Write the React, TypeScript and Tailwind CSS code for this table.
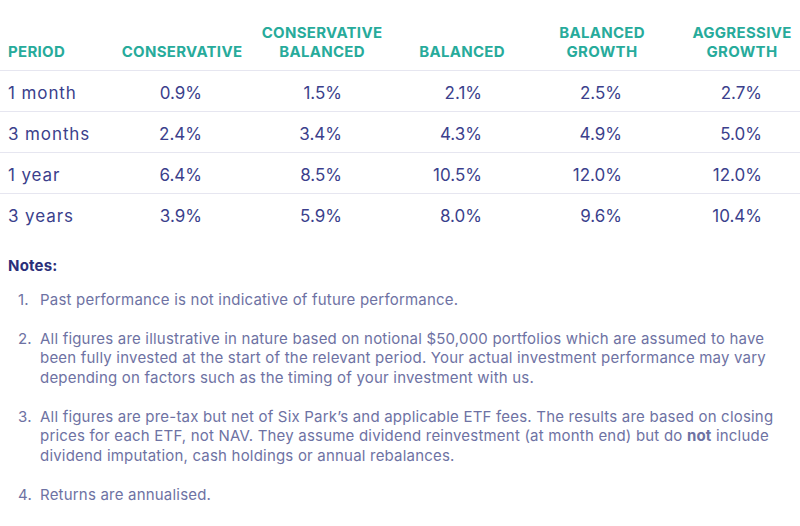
const headers = [
  ['PERIOD'],
  ['CONSERVATIVE'],
  ['CONSERVATIVE', 'BALANCED'],
  ['BALANCED'],
  ['BALANCED', 'GROWTH'],
  ['AGGRESSIVE', 'GROWTH'],
]

const rows = [
  ['1 month', '0.9%', '1.5%', '2.1%', '2.5%', '2.7%'],
  ['3 months', '2.4%', '3.4%', '4.3%', '4.9%', '5.0%'],
  ['1 year', '6.4%', '8.5%', '10.5%', '12.0%', '12.0%'],
  ['3 years', '3.9%', '5.9%', '8.0%', '9.6%', '10.4%'],
]

export default function App() {
  return (
    <div
      className="w-[800px] h-[526px] overflow-hidden bg-white"
      style={{ fontFamily: 'Inter, "Noto Sans", sans-serif' }}
    >
      <div className="w-[812px]">
        <div className="grid grid-cols-[112px_repeat(5,140px)] items-end h-[71px] pb-[9px] border-b border-[#e6e6f0]">
          {headers.map((h, i) => (
            <div
              key={i}
              className={
                'text-[15px] leading-[19px] font-bold tracking-[0.3px] text-[#27ab9b] ' +
                (i === 0 ? 'pl-2 text-left' : 'text-center')
              }
            >
              {h.map((l) => (
                <div key={l}>{l}</div>
              ))}
            </div>
          ))}
        </div>
        {rows.map((r, ri) => (
          <div
            key={ri}
            className={
              'grid grid-cols-[112px_repeat(5,140px)] items-center h-[41px] pt-[5px] text-[17px] text-[#3b3f8c] ' +
              (ri < rows.length - 1 ? 'border-b border-[#e6e6f0]' : '')
            }
          >
            {r.map((c, ci) => (
              <div key={ci} className={ci === 0 ? 'pl-2 tracking-[0.9px]' : 'text-right pr-[50px]'}>
                {c}
              </div>
            ))}
          </div>
        ))}
      </div>

      <div className="px-2 pt-[21px] text-[15px] leading-[19.5px] tracking-[0.2px]">
        <div className="font-bold text-[#2b2f7a]">Notes:</div>
        <ol className="mt-[14px] space-y-[19.5px] text-[#6e72a3]">
          <li className="flex">
            <span className="w-[32px] shrink-0 pl-[10px]">1.</span>
            <span>Past performance is not indicative of future performance.</span>
          </li>
          <li className="flex">
            <span className="w-[32px] shrink-0 pl-[10px]">2.</span>
            <span className="whitespace-nowrap">
              All figures are illustrative in nature based on notional $50,000 portfolios which are assumed to have
              <br />
              been fully invested at the start of the relevant period. Your actual investment performance may vary
              <br />
              depending on factors such as the timing of your investment with us.
            </span>
          </li>
          <li className="flex">
            <span className="w-[32px] shrink-0 pl-[10px]">3.</span>
            <span className="whitespace-nowrap">
              All figures are pre-tax but net of Six Park’s and applicable ETF fees. The results are based on closing
              <br />
              prices for each ETF, not NAV. They assume dividend reinvestment (at month end) but do{' '}
              <b className="font-bold">not</b> include
              <br />
              dividend imputation, cash holdings or annual rebalances.
            </span>
          </li>
          <li className="flex">
            <span className="w-[32px] shrink-0 pl-[10px]">4.</span>
            <span>Returns are annualised.</span>
          </li>
        </ol>
      </div>
    </div>
  )
}
